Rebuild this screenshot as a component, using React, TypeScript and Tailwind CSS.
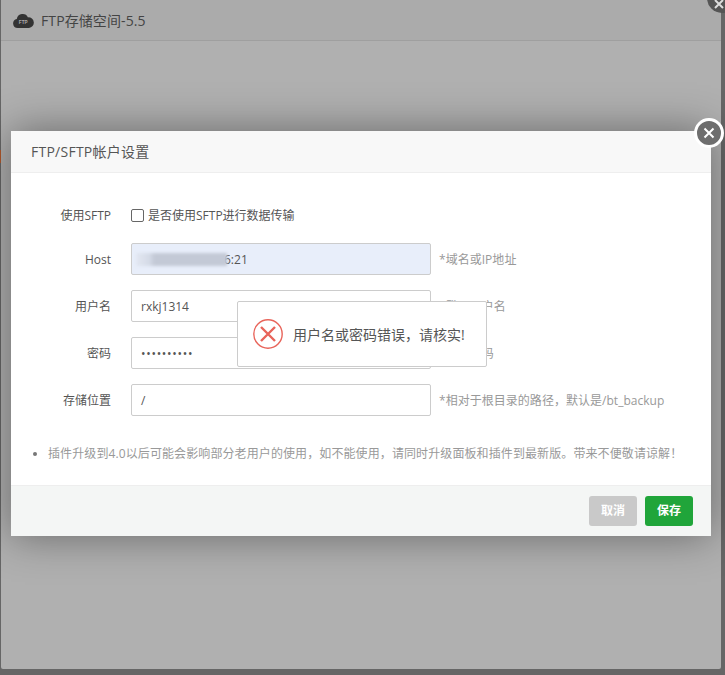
import React from "react";

const font = { fontFamily: '"Open Sans","Noto Sans CJK SC",sans-serif' };

function Row({ label, hint, children }: { label: string; hint?: React.ReactNode; children: React.ReactNode }) {
  return (
    <div className="flex items-center h-[32px] mb-[15px]">
      <div className="w-[100px] pt-[1px] text-right text-[12px] text-[#555] mr-[20px] shrink-0">{label}</div>
      {children}
      {hint && <div className="ml-[8px] pt-[1px] text-[12px] text-[#999] whitespace-nowrap tracking-[0.03px]">{hint}</div>}
    </div>
  );
}

function Field({ value, className = "" }: { value: string; className?: string }) {
  return (
    <div className={`w-[300px] h-[32px] border border-[#ccc] rounded-[2px] pl-[9px] pt-[1px] flex items-center text-[12px] text-[#555] bg-white ${className}`}>
      {value}
    </div>
  );
}

export default function App() {
  return (
    <div className="relative w-[725px] h-[675px] overflow-hidden bg-[#666]" style={font}>
      <div className="ml-[1px] w-[720px] h-[669px] bg-[#b0b0b0] rounded-b-[2px]">
        <div className="h-[41px] border-b border-[#9f9f9f] bg-[#ababab] flex items-center pl-[12px]">
          <svg width="21" height="15" viewBox="0 0 21 15" className="mr-[7px] mt-[1px]">
            <path d="M4.8 15a4.6 4.6 0 0 1-1-9.1A5.9 5.9 0 0 1 15 4.4a5.3 5.3 0 0 1 1 10.6z" fill="#333" />
            <text x="10.2" y="11" textAnchor="middle" fontSize="4.6" fontWeight="700" fill="#aaa" fontFamily="Liberation Sans, sans-serif">FTP</text>
          </svg>
          <span className="text-[14px] text-[#444] tracking-[0.1px]">FTP存储空间-5.5</span>
        </div>
      </div>

      <div className="absolute left-0 top-[150px] w-[1px] h-[13px] bg-[#b0582c]" />

      <div className="absolute right-[-12px] top-[-17px] w-[30px] h-[30px] rounded-full bg-[#555] text-white flex items-end justify-center pb-[3px]">
        <svg width="12" height="12" viewBox="0 0 12 12" className="-ml-[6px]"><path d="M2 2l8 8M10 2l-8 8" stroke="#ddd" strokeWidth="2" /></svg>
      </div>

      <div className="absolute left-[11px] top-[131px] w-[700px] h-[405px] bg-white shadow-[0_0_40px_rgba(0,0,0,0.42)] flex flex-col">
        <div className="h-[42px] shrink-0 bg-[#f8f8f8] border-b border-[#eee] flex items-center pl-[20px] text-[14px] text-[#555] tracking-[0.25px]">
          FTP/SFTP帐户设置
        </div>
        <div className="flex-1 pt-[26px]">
          <div className="flex items-center h-[32px] mb-[12px]">
            <div className="w-[100px] pt-[1px] text-right text-[12px] text-[#555] mr-[20px]">使用SFTP</div>
            <span className="w-[13px] h-[13px] border border-[#666] rounded-[2px] bg-white mr-[4px]" />
            <span className="pt-[1px] text-[12px] text-[#555]">是否使用SFTP进行数据传输</span>
          </div>
          <Row label="Host" hint="*域名或IP地址">
            <div className="relative w-[300px] h-[32px] border border-[#ccc] rounded-[2px] pl-[92px] pt-[1px] flex items-center text-[12px] text-[#555] bg-[#e8eefa]">
              <span>6:21</span>
              <div className="absolute left-[4px] top-[9px] w-[91px] h-[13px] blur-[1.5px] bg-[linear-gradient(90deg,#e2e7f2_0%,#d4dae6_15%,#c3c9d6_20%,#c3c9d6_100%)]" />
            </div>
          </Row>
          <Row label="用户名" hint="*登录用户名">
            <Field value="rxkj1314" />
          </Row>
          <Row label="密码" hint="*登录密码">
            <Field value="••••••••••" className="tracking-[0.7px]" />
          </Row>
          <Row label="存储位置" hint="*相对于根目录的路径，默认是/bt_backup">
            <Field value="/" />
          </Row>
          <ul className="mt-[29px] pl-[37px] list-disc text-[12px] text-[#999] marker:text-[#777] tracking-[0.1px]">
            <li>插件升级到4.0以后可能会影响部分老用户的使用，如不能使用，请同时升级面板和插件到最新版。带来不便敬请谅解！</li>
          </ul>
        </div>
        <div className="h-[51px] shrink-0 bg-[#f4f6f5] border-t border-[#eee] flex items-center justify-end gap-[8px] pr-[18px]">
          <button className="w-[48px] h-[30px] rounded-[3px] bg-[#c9c9c9] text-white text-[12px] font-bold">取消</button>
          <button className="w-[48px] h-[30px] rounded-[3px] bg-[#20a53a] text-white text-[12px] font-bold">保存</button>
        </div>
      </div>

      <div className="absolute left-[694px] top-[118px] w-[30px] h-[30px] rounded-full bg-[#6e6e6e] border-[3px] border-white flex items-center justify-center">
        <svg width="12" height="12" viewBox="0 0 12 12"><path d="M1.5 1.5l9 9M10.5 1.5l-9 9" stroke="#fff" strokeWidth="2" /></svg>
      </div>

      <div className="absolute left-[237px] top-[301px] w-[250px] h-[66px] bg-white border border-[#ccc] rounded-[2px] flex items-center pl-[15px] text-[14px] text-[#555]">
        <svg width="30" height="30" viewBox="0 0 30 30" className="mr-[10px] shrink-0">
          <circle cx="15" cy="15" r="14.2" fill="none" stroke="#e8645a" strokeWidth="1.4" />
          <path d="M8 8l14 14M22 8L8 22" stroke="#e8645a" strokeWidth="2.4" />
        </svg>
        <span className="whitespace-nowrap">用户名或密码错误，请核实!</span>
      </div>
    </div>
  );
}
